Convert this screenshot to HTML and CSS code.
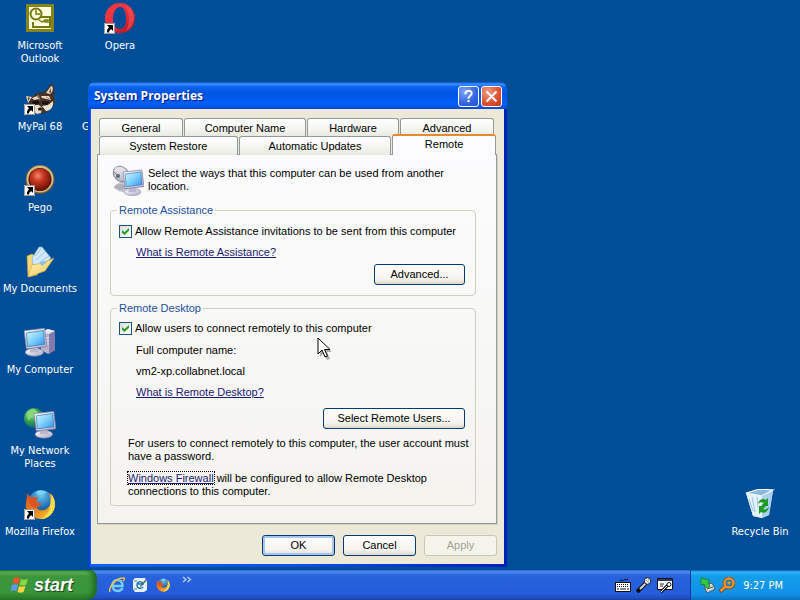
FILE: index.html
```html
<!DOCTYPE html>
<html lang="en">
<head>
<meta charset="utf-8">
<title>System Properties</title>
<link rel="stylesheet" href="styles.css">
</head>
<body>
<svg class="defs" aria-hidden="true">
  <defs>
    <linearGradient id="screen" x1="0" y1="0" x2="1" y2="1"><stop offset="0" stop-color="#d4f4ff"/><stop offset=".5" stop-color="#7fd0fb"/><stop offset="1" stop-color="#2f8ee8"/></linearGradient>
    <linearGradient id="plastic" x1="0" y1="0" x2="1" y2="1"><stop offset="0" stop-color="#ffffff"/><stop offset="1" stop-color="#a9a8c4"/></linearGradient>
    <linearGradient id="opera" x1="0" y1="0" x2="1" y2="1"><stop offset="0" stop-color="#ff3b45"/><stop offset=".5" stop-color="#e8303c"/><stop offset="1" stop-color="#a50f1c"/></linearGradient>
    <linearGradient id="folder" x1="0" y1="0" x2="1" y2="1"><stop offset="0" stop-color="#fff6c0"/><stop offset="1" stop-color="#efc552"/></linearGradient>
    <linearGradient id="fox" x1="0" y1="0" x2="1" y2="1"><stop offset="0" stop-color="#e0501c"/><stop offset=".5" stop-color="#f0801c"/><stop offset="1" stop-color="#ffd52e"/></linearGradient>
    <radialGradient id="redball" cx=".4" cy=".35" r=".7"><stop offset="0" stop-color="#f08a70"/><stop offset=".4" stop-color="#c8371f"/><stop offset="1" stop-color="#6e0f08"/></radialGradient>
    <radialGradient id="globe" cx=".35" cy=".3" r=".8"><stop offset="0" stop-color="#a8e8a0"/><stop offset=".5" stop-color="#2f9c4c"/><stop offset="1" stop-color="#12508c"/></radialGradient>
    <radialGradient id="ocean" cx=".5" cy=".2" r=".8"><stop offset="0" stop-color="#6cc8f0"/><stop offset=".6" stop-color="#2271b8"/><stop offset="1" stop-color="#153a74"/></radialGradient>
    <symbol id="arrow" viewBox="0 0 11 11"><path d="M0 0h11v11H0z" fill="#fff"/><path d="M.5 .5h10v10H.5z" fill="none" stroke="#9a9a9a"/><path d="M3 2h6v6L7.300 6.300C6 7 5 8 5 9.500H3C2.500 7.500 3.500 5.800 5 4.300z" fill="#000"/></symbol>
    <symbol id="firefox" viewBox="0 0 32 32">
      <circle cx="17" cy="14" r="13" fill="url(#ocean)"/>
      <path d="M12 3c4-3 9-1 11 1-3 0-4 2-7 2-2 0-3-1-4-3z" fill="#7fd4f4"/>
      <path d="M27 5c5 5 6 13 2 19-4 7-13 9-20 5C2 25 0 18 2 11L3 5l4 4c2-1 5-1 7 0-2 2-2 3-1 5l4 1c0 2-3 2-4 4 0 2 2 3 5 3 5 0 9-4 9-9 0-3 0-5-2-8z" fill="url(#fox)"/>
      <path d="M27 5c5 5 6 13 2 19-3 5-8 7-13 7 8-3 12-10 11-26z" fill="#ffdc4c"/>
      <path d="M4 10c4-2 7-1 10-1-2 2-3 4-1 5l4 1c0 2-4 2-5 5-4-1-7-4-8-10z" fill="#dc5520"/>
    </symbol>
    <symbol id="monitor" viewBox="0 0 22 26">
      <ellipse cx="10" cy="22" rx="8" ry="3.500" fill="url(#plastic)" stroke="#8886aa" stroke-width=".6"/>
      <path d="M7 17h6l1 5H6z" fill="#b9b8d0"/>
      <path d="M1 3l18-2 2 16-18 2z" fill="url(#plastic)" stroke="#8280a4" stroke-width=".7"/>
      <path d="M3 5l15-2 1 12-15 2z" fill="url(#screen)" stroke="#2c78c0" stroke-width=".6"/>
    </symbol>
  </defs>
</svg>

<main class="desktop">
  <ul class="icons">
    <li class="icon c1 r1"><svg viewBox="0 0 32 32"><path d="M2 1h28v28H2z" fill="#85851a"/><path d="M5 4h22v22H5z" fill="#fffde0"/><path d="M14 14h12v10H9v-5" fill="#fffde0" stroke="#77770f" stroke-width="2"/><circle cx="12" cy="11" r="5.500" fill="#fffde0" stroke="#77770f" stroke-width="2"/><path d="M12 7v4h4M15 17l3 2 4-2M21 17h3v2h-3z" fill="none" stroke="#77770f" stroke-width="1.500"/></svg><span>Microsoft Outlook</span></li>
    <li class="icon c2 r1"><svg viewBox="0 0 32 32"><path fill-rule="evenodd" d="M16 0C7 0 1 7 1 15.500S7 30 16 30s15-6 15-14.500S25 0 16 0zm0 4c4 0 6 5 6 11.500S20 26 16 26s-7-4-7-10.500S12 4 16 4z" fill="url(#opera)"/><path d="M21 2c12 5 12 20 1 26 4-7 4-19-1-26z" fill="#ff6268" opacity=".5"/><use href="#arrow" x="0" y="20" width="11" height="11"/></svg><span>Opera</span></li>
    <li class="icon c1 r2"><svg viewBox="0 0 32 32"><path d="M2 12l6 1 5-4 8-1 5-7c4-2 5 4 4 9l1 9-4 6-8 5-7-3-7-8z" fill="#443429"/><path d="M2 12l6 1-4 6zM22 9l5-7c3 0 2 7-1 8z" fill="#e8d6bc"/><path d="M4 13l2 1-2 3zM25 8l2-4v5z" fill="#5f4836"/><path d="M8 14l5-2 2 3-5 1zM17 12l8 0 2 4-9-2zM5 20l5 1 5 0 3 3-1 5-4 1-7-5z" fill="#ead9c4"/><path d="M18 22l6-1 5-4c1 6-3 10-7 10z" fill="#f0e2d0"/><path d="M7 18l6-2 3 3-5 2zM18 17l8 1-3 3-5-1z" fill="#17120f"/><ellipse cx="16" cy="25" rx="2" ry="1.500" fill="#181010"/><path d="M22 13l5 3M14 11l2 5" stroke="#b98a5d"/><use href="#arrow" x="0" y="20" width="11" height="11"/></svg><span>MyPal 68</span></li>
    <li class="icon c2 r2 cut"><svg viewBox="0 0 32 32"></svg><span>G</span></li>
    <li class="icon c1 r3"><svg viewBox="0 0 32 32"><circle cx="16" cy="14.500" r="14.500" fill="#6d5a39"/><circle cx="16" cy="14" r="13.500" fill="#d3bc82"/><circle cx="16" cy="14.500" r="11.500" fill="#5b170b"/><circle cx="16" cy="14" r="10.500" fill="url(#redball)"/><use href="#arrow" x="0" y="20" width="11" height="11"/></svg><span>Pego</span></li>
    <li class="icon c1 r4"><svg viewBox="0 0 32 32"><path d="M3 10l5-2 3 2 12 2-10 17-9 2z" fill="#f4d776" stroke="#c89c34" stroke-width=".6"/><path d="M8 12l7-11h3l9 11-10 9-8-2z" fill="#d2e9fd" stroke="#79add9" stroke-width=".7"/><path d="M11 10l6-7M12 14l9-8M16 16l9-6" stroke="#98c4eb"/><path d="M4 31l4-12 10-2 12-5-9 13z" fill="url(#folder)" stroke="#cca243" stroke-width=".6"/><path d="M15 17l4-2 4 1-5 4z" fill="#8ac1dc"/></svg><span>My Documents</span></li>
    <li class="icon c1 r5"><svg viewBox="0 0 32 32"><path d="M17 5l7-3 7 2v19l-7 4-7-4z" fill="#b6b2cf"/><path d="M17 5l7-3 7 2-6 3z" fill="#e9e7f6"/><path d="M25 7l6-3v19l-6 4z" fill="#827ba9"/><path d="M21 11h4M21 14h4M21 17h4" stroke="#eeeefa"/><use href="#monitor" x="-1" y="0" width="25" height="30"/></svg><span>My Computer</span></li>
    <li class="icon c1 r6"><svg viewBox="0 0 32 32"><circle cx="10" cy="10" r="10" fill="url(#globe)"/><path d="M3 5l6-4 5 3-3 4-4 1-3 4z" fill="#8ad976"/><use href="#monitor" x="9" y="2" width="24" height="29"/></svg><span>My Network Places</span></li>
    <li class="icon c1 r7"><svg viewBox="0 0 32 32"><use href="#firefox" width="32" height="31"/><use href="#arrow" x="0" y="20" width="11" height="11"/></svg><span>Mozilla Firefox</span></li>
    <li class="icon last r7"><svg viewBox="0 0 32 32"><path d="M2 4l14-4 13 1-4 25-7 3-9-2z" fill="#d3e8f7"/><path d="M2 4l14-4 13 1-11 6z" fill="#8fb9dc" stroke="#f2fbff" stroke-width="1.200"/><path d="M2 4l16 3v22l-9-2z" fill="#e4f2fb"/><path d="M18 7l11-5-4 24-7 3z" fill="#a9cfec"/><path d="M8 8l3 15M13 8l1 10M5 10l4 12" stroke="#9fc4e0" fill="none"/><path d="M14 15c1-5 5-6 8-4l2-2v8h-7l3-3c-2-1-4-1-6 1zM25 18c-1 5-5 7-8 5l-2 2v-8h7l-3 3c2 1 4 0 6-2z" fill="#1f9a24"/></svg><span>Recycle Bin</span></li>
  </ul>

  <section class="window" aria-label="System Properties">
    <header class="titlebar">
      <h1>System Properties</h1>
      <button class="cap help" aria-label="Help"><svg viewBox="0 0 21 21"><path d="M7 8c0-5 7-5 7-1 0 3-3.500 2.500-3.500 6" fill="none" stroke="#fff" stroke-width="2.200"/><path d="M9.300 14.500h2.400v2.300H9.300z" fill="#fff"/></svg></button>
      <button class="cap close" aria-label="Close"><svg viewBox="0 0 21 21"><path d="M5 5l11 11M16 5L5 16" stroke="#fff" stroke-width="2.200"/></svg></button>
    </header>
    <div class="client">
      <nav class="tabs" role="tablist">
        <div class="tabrow upper">
          <button class="tab" role="tab">General</button>
          <button class="tab" role="tab">Computer Name</button>
          <button class="tab" role="tab">Hardware</button>
          <button class="tab" role="tab">Advanced</button>
        </div>
        <div class="tabrow lower">
          <button class="tab" role="tab">System Restore</button>
          <button class="tab" role="tab">Automatic Updates</button>
          <button class="tab active" role="tab" aria-selected="true">Remote</button>
        </div>
      </nav>
      <div class="panel" role="tabpanel">
        <div class="intro">
          <svg viewBox="0 0 32 32"><path d="M4 20l8-6 5 9-3 5-8-2z" fill="#c6c7cf"/><ellipse cx="8" cy="22" rx="6" ry="3" fill="#aeb0bc"/><ellipse cx="9" cy="9" rx="8.500" ry="7" transform="rotate(45 9 9)" fill="url(#plastic)" stroke="#81838f"/><path d="M3 4c6-4 12 3 12 10" fill="none" stroke="#dfe1e7" stroke-width="2"/><circle cx="6" cy="11" r="2" fill="#63656f"/><path d="M6 11l-4-4" stroke="#777"/><use href="#monitor" x="10" y="3" width="23" height="29"/></svg>
          <p>Select the ways that this computer can be used from another location.</p>
        </div>
        <fieldset class="assist">
          <legend>Remote Assistance</legend>
          <label class="check"><input type="checkbox" checked>Allow Remote Assistance invitations to be sent from this computer</label>
          <p class="line"><a href="#assistance">What is Remote Assistance?</a></p>
          <div class="right"><button class="btn medium">Advanced...</button></div>
        </fieldset>
        <fieldset class="remote">
          <legend>Remote Desktop</legend>
          <label class="check"><input type="checkbox" checked>Allow users to connect remotely to this computer</label>
          <p class="line">Full computer name:</p>
          <p class="line">vm2-xp.collabnet.local</p>
          <p class="line"><a href="#desktop">What is Remote Desktop?</a></p>
          <div class="right"><button class="btn wide">Select Remote Users...</button></div>
          <p class="note">For users to connect remotely to this computer, the user account must have a password.</p>
          <p class="note"><a class="focused" href="#firewall">Windows Firewall</a> will be configured to allow Remote Desktop connections to this computer.</p>
        </fieldset>
      </div>
      <footer class="actions">
        <button class="btn default">OK</button>
        <button class="btn">Cancel</button>
        <button class="btn" disabled>Apply</button>
      </footer>
    </div>
  </section>

  <svg class="cursor" viewBox="0 0 16 24" aria-hidden="true"><path d="M3 3v17l4-4 3 7 3-1-3-7h5z" fill="#000" opacity=".3"/><path d="M1 1v16l4-4 3 7 2.500-1-3-6.500H13z" fill="#fff" stroke="#000"/></svg>
</main>

<footer class="taskbar">
  <button class="start"><svg viewBox="0 0 20 20"><path d="M4 3c2-1 4-1 6 0L8.500 9c-2-1-4-1-6 0z" fill="#f0562b"/><path d="M11 4c2 1 4 1 7 0l-2 6c-2 1-4 1-6.500 0z" fill="#8bd348"/><path d="M2 10c2-1 4-1 6 0l-1.500 6c-2-1-4-1-6 0z" fill="#5a9cf4"/><path d="M9 11c2 1 4 1 6.500 0l-2 6c-2 1-4 1-6 0z" fill="#fbd23c"/></svg>start</button>
  <div class="quick">
    <svg viewBox="0 0 16 16"><path d="M13.500 11c-1 2-3 3-5 3-3 0-5-2.500-5-5.500S5.500 3 8.500 3s5 2.500 5 6h-9" fill="none" stroke="#73cdfa" stroke-width="2.600"/><path d="M1 15C-1 10 8 0 15 1c1 1 0 2-1 3" fill="none" stroke="#f2c23c" stroke-width="1.500"/></svg>
    <svg viewBox="0 0 16 16"><path d="M3 1h10l2 3v9l-3 2H3l-2-3V3z" fill="#e4f2fc"/><path d="M11 10c-1 2-6 2-6-2s5-4 6-1H6" fill="none" stroke="#2d78bd" stroke-width="1.500"/><path d="M8 9l6-7 1 1-6 7z" fill="#467"/><path d="M2 4h3M2 12h3" stroke="#4f9a5c"/></svg>
    <svg viewBox="0 0 32 32"><use href="#firefox" x="2" y="2" width="28" height="28"/></svg>
    <svg class="chevron" viewBox="0 0 10 16"><path d="M1 2l3 2.500L1 7M5.500 2l3 2.500L5.500 7" fill="none" stroke="#b9d7ff" stroke-width="1.200"/></svg>
  </div>
  <div class="lang">
    <svg viewBox="0 0 16 16"><path d="M5 4c1-3 2 1 4-1s2 1 4-1" fill="none" stroke="#111"/><path d="M0 5h16v10H0z" fill="#111"/><path d="M1 6h14v8H1z" fill="#fff"/><path d="M2 7.500h12M2 9.500h12" stroke="#111" stroke-dasharray="1 1"/><path d="M2 12h2M5 12h6M12 12h2" stroke="#111"/></svg>
    <svg viewBox="0 0 16 16"><path d="M10 6l-6 6-3 3" stroke="#111" stroke-width="4"/><path d="M10 6l-6 6" stroke="#d8d8d8" stroke-width="2"/><circle cx="11.500" cy="4" r="3.300" fill="#f3f3f3" stroke="#222"/><path d="M10 3l3 3M12 2l1 2" stroke="#888" stroke-width=".8"/></svg>
    <svg viewBox="0 0 16 16"><path d="M.5 1.500h15v11H.5z" fill="#fff" stroke="#111"/><path d="M1 2h14v2H1z" fill="#2d3a66"/><path d="M3 7h4M3 9h3" stroke="#222"/><path d="M4 15l7-7" stroke="#111" stroke-width="3"/><path d="M4 15l7-7" stroke="#fff"/><circle cx="12" cy="7.500" r="2" fill="#fff" stroke="#111"/></svg>
  </div>
  <div class="tray">
    <svg viewBox="0 0 16 16"><path d="M4 9l8-3 3 6-8 4z" fill="#d5d9d7" stroke="#4c5964"/><path d="M7 12l6-2" stroke="#556"/><path d="M1 1l9 2-2 2 2 5-4 1-2-4-3 1z" fill="#36c444" stroke="#13722b" stroke-width=".7"/></svg>
    <svg viewBox="0 0 16 16"><circle cx="10" cy="6" r="4.500" fill="none" stroke="#7c3c08" stroke-width="3.500"/><path d="M7 9l-6 5.500" stroke="#7c3c08" stroke-width="4"/><circle cx="10" cy="6" r="4.500" fill="none" stroke="#f6932a" stroke-width="2.400"/><path d="M7 9l-5.500 5" stroke="#f6932a" stroke-width="2.600"/><circle cx="10" cy="6" r="1.300" fill="#f6932a"/></svg>
    <time>9:27 PM</time>
  </div>
</footer>
</body>
</html>
```
FILE: styles.css
```css
* { box-sizing: border-box; }

body {
  margin: 0;
  min-height: 100vh;
  display: flex;
  flex-direction: column;
  background: #004e98;
  font: 11px/13px "Liberation Sans", Arial, sans-serif;
  color: #000;
}

p, h1, ul { margin: 0; padding: 0; }
button { font: inherit; padding: 0; color: inherit; }
svg { display: block; flex: none; }
.defs { position: absolute; width: 0; height: 0; }

/* Desktop */
.desktop { flex: 1; position: relative; }

.icons {
  list-style: none;
  display: grid;
  grid-template-columns: repeat(auto-fill, 80px);
  grid-auto-rows: 81px;
}
.icon {
  display: flex;
  flex-direction: column;
  align-items: center;
  gap: 4px;
  padding-top: 3px;
  color: #fff;
  text-align: center;
  font-family: "DejaVu Sans Condensed", Tahoma, sans-serif;
}
.icon svg { width: 32px; height: 32px; }
.icon span { padding: 0 2px; }
.c1 { grid-column: 1; }
.c2 { grid-column: 2; }
.last { grid-column: -2; }
.r1 { grid-row: 1; }
.r2 { grid-row: 2; }
.r3 { grid-row: 3; }
.r4 { grid-row: 4; }
.r5 { grid-row: 5; }
.r6 { grid-row: 6; }
.r7 { grid-row: 7; }
.cut { align-items: flex-start; }

/* Dialog */
.window {
  position: absolute;
  left: 88px;
  top: 82px;
  width: 419px;
  padding: 0 3px 3px;
  border-radius: 7px 7px 0 0;
  background: linear-gradient(90deg, #0831d9, #1060f0 3px, #1050e0 50%, #0020b8);
}
.titlebar {
  display: flex;
  align-items: center;
  gap: 2px;
  height: 27px;
  margin: 0 -3px;
  padding: 1px 5px 0 6px;
  border-radius: 7px 7px 0 0;
  background: linear-gradient(#0a48c8, #3a92ff 2px, #0a62ec 5px, #0054e3 12px, #0060fa 22px, #0348d0);
}
.titlebar h1 {
  flex: 1;
  color: #fff;
  font: bold 12px/16px "Open Sans", "Trebuchet MS", sans-serif;
  text-shadow: 1px 1px 1px #0a1883;
}
.cap {
  width: 21px;
  height: 21px;
  border: 1px solid #fff;
  border-radius: 3px;
}
.cap svg { width: 19px; height: 19px; }
.help { background: radial-gradient(circle at 30% 25%, #7ea6f4, #3264e0 60%, #2450c8); }
.close { background: radial-gradient(circle at 30% 25%, #f09a80, #dc5030 60%, #c03a18); }

.client { background: #ece9d8; padding: 9px 7px 8px 6px; }
.tabs { padding: 0 3px 0 2px; }
.tabrow { display: grid; column-gap: 1px; height: 18px; }
.upper { grid-template-columns: 84fr 122fr 92fr 94fr; }
.lower { grid-template-columns: 139fr 153fr 102fr; }
.tab {
  border: 1px solid #919b9c;
  border-bottom: 0;
  border-radius: 3px 3px 0 0;
  background: linear-gradient(#fff, #f3f3ee 70%, #e9e8e0);
  padding-top: 2px;
}
.lower .tab { padding-top: 1px; }
.lower .active {
  position: relative;
  height: 21px;
  margin: -2px -2px 0 0;
  border-top: 2px solid #e68b2c;
  background: #fcfcfe;
  padding-bottom: 2px;
  padding-top: 0;
}

.panel {
  border: 1px solid #919b9c;
  background: linear-gradient(#fcfcfe, #f4f3ee);
  padding: 10px 20px 17px 12px;
  box-shadow: 1px 1px 0 #d5d2c3;
}
.intro { display: flex; gap: 4px; padding: 0 20px 0 2px; margin-bottom: 7px; }
.intro svg { width: 32px; height: 32px; }
.intro p { padding-top: 2px; }

fieldset {
  margin: 0;
  min-width: 0;
  border: 1px solid #d0d0bf;
  border-radius: 4px;
  padding: 8px 10px 10px 8px;
}
.assist { margin-bottom: 6px; }
.remote { padding-top: 7px; padding-bottom: 7px; }
legend { padding: 0 2px; margin-left: -2px; color: #1c4f9c; }
.check { display: flex; gap: 3px; height: 13px; }
.check input {
  appearance: none;
  flex: none;
  width: 13px;
  height: 13px;
  margin: 0;
  border: 1px solid #1c5180;
  background: linear-gradient(135deg, #dcdcd7, #fff);
}
.check input::before {
  content: "";
  display: block;
  width: 7px;
  height: 7px;
  margin: 2px;
  background: #21a121;
  clip-path: polygon(0 30%, 35% 62%, 100% 0, 100% 38%, 35% 100%, 0 68%);
}
.line { margin: 8px 0 0 17px; }
.remote .check + .line { margin-top: 9px; }
a { color: #1a1a72; }
.focused { outline: 1px dotted #000; }
.right { display: flex; justify-content: flex-end; margin-top: 5px; }
.remote .right { margin: 9px 0 8px; }
.note { padding-left: 9px; margin-right: -8px; }
.note + .note { margin-top: 9px; }

.btn {
  width: 73px;
  height: 21px;
  border: 1px solid #003c74;
  border-radius: 3px;
  background: linear-gradient(#fff, #f4f3ee 75%, #dcd8cc);
}
.medium { width: 91px; }
.wide { width: 142px; }
.default { box-shadow: inset 0 0 0 2px #a9c4f0; }
.btn:disabled { border-color: #c9c7ba; background: #f5f4ea; color: #a1a192; }
.actions { display: flex; justify-content: flex-end; gap: 8px; margin-top: 11px; }

.cursor { position: absolute; left: 317px; top: 337px; width: 16px; height: 24px; }

/* Taskbar */
.taskbar {
  display: flex;
  height: 30px;
  background: linear-gradient(#3168d5, #4c8cf0 2px, #2a63dc 5px, #245cdb 24px, #1f4fc0 28px, #1941a5);
}
.start {
  display: flex;
  align-items: center;
  gap: 4px;
  width: 97px;
  padding: 0 0 1px 10px;
  border: 0;
  border-radius: 0 8px 10px 0;
  background: linear-gradient(#2c7c2c, #64b864 2px, #3c963c 6px, #38963a 22px, #2b7a2b);
  box-shadow: inset -4px 0 5px #1f6a24;
  color: #fff;
  font: italic bold 18px/22px "Liberation Sans", Arial, sans-serif;
  text-shadow: 1px 1px 1px #173d17;
}
.start svg { width: 20px; height: 20px; }
.quick, .lang, .tray { display: flex; align-items: center; }
.quick { flex: 1; gap: 7px; padding-left: 12px; }
.quick svg, .lang svg, .tray svg { width: 16px; height: 16px; }
.quick .chevron { width: 10px; margin: 0 0 4px 4px; }
.lang { gap: 5px; padding-right: 17px; }
.tray {
  gap: 3px;
  padding: 0 17px 0 9px;
  border-left: 1px solid #0c3a9c;
  background: linear-gradient(#0c59b9, #2cb4f8 2px, #139ee9 6px, #1290e8 24px, #0d6fc0);
  color: #fff;
  font-family: "DejaVu Sans Condensed", Tahoma, sans-serif;
}
.tray time { margin-left: 5px; }
```
